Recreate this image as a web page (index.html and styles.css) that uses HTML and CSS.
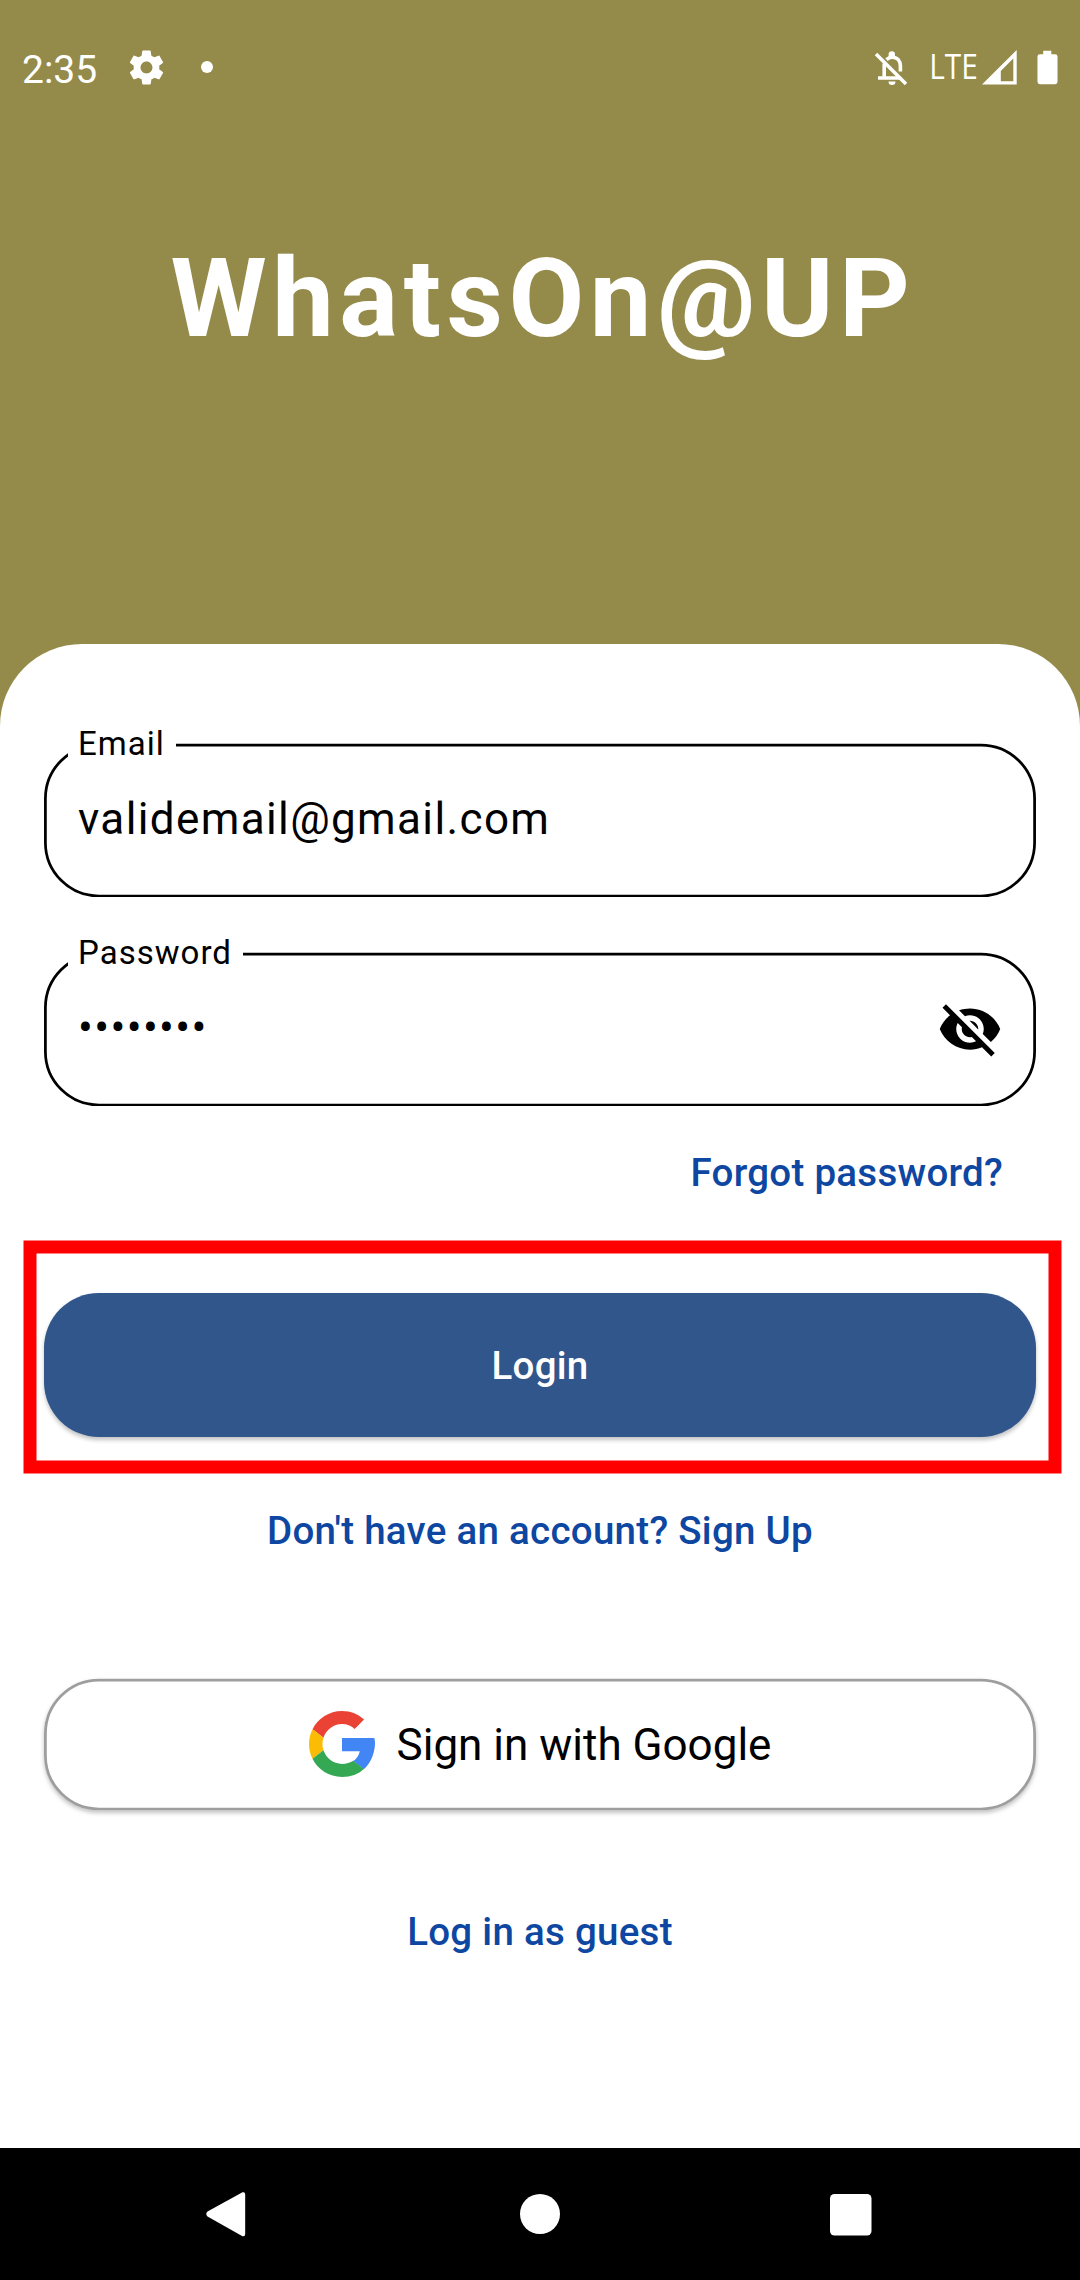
FILE: index.html
```html
<!DOCTYPE html>
<html lang="en">
<head>
<meta charset="utf-8">
<title>WhatsOn@UP</title>
<link rel="stylesheet" href="styles.css">
</head>
<body>
<div class="screen">
  <div class="status-bar">
    <span class="clock">2:35</span>
    <svg class="gear" viewBox="0 0 24 24"><path d="M19.43 12.98c.04-.32.07-.64.07-.98s-.03-.66-.07-.98l2.11-1.65c.19-.15.24-.42.12-.64l-2-3.46c-.12-.22-.39-.3-.61-.22l-2.49 1c-.52-.4-1.08-.73-1.69-.98l-.38-2.65C14.46 2.18 14.25 2 14 2h-4c-.25 0-.46.18-.49.42l-.38 2.65c-.61.25-1.17.59-1.69.98l-2.49-1c-.23-.09-.49 0-.61.22l-2 3.46c-.13.22-.07.49.12.64l2.11 1.65c-.04.32-.07.65-.07.98s.03.66.07.98l-2.11 1.65c-.19.15-.24.42-.12.64l2 3.46c.12.22.39.3.61.22l2.49-1c.52.4 1.08.73 1.69.98l.38 2.65c.03.24.24.42.49.42h4c.25 0 .46-.18.49-.42l.38-2.65c.61-.25 1.17-.59 1.69-.98l2.49 1c.23.09.49 0 .61-.22l2-3.46c.12-.22.07-.49-.12-.64l-2.11-1.65zM12 15.5c-1.93 0-3.5-1.57-3.5-3.5s1.57-3.5 3.5-3.5 3.5 1.57 3.5 3.5-1.57 3.5-3.5 3.5z"/></svg>
    <span class="dot"></span>
    <span class="spacer"></span>
    <svg class="bell" viewBox="0 0 34 36">
      <path class="line" d="M2 4L32 34"/>
      <path class="line" d="M10.200 13.500V27.500M4 28H25.500M12.500 9.600Q15 7.200 18 7.200C23.500 7.200 26.400 11 26.400 16V21.500"/>
      <path d="M14.600 7.500V4.500A3.200 3.200 0 0 1 21 4.500V7.500ZM14.500 31.500H21.500A3.500 3.500 0 0 1 14.500 31.500Z"/>
    </svg>
    <svg class="network" viewBox="0 0 50 46"><text x="0.300" y="35" textLength="48.500" lengthAdjust="spacingAndGlyphs">LTE</text></svg>
    <svg class="signal" viewBox="0 0 36 36"><path fill-rule="evenodd" d="M0 34.500L34.700 0V34.500ZM18.800 31.300H31.300V8.500L18.800 21Z"/></svg>
    <svg class="battery" viewBox="0 0 22 36"><path d="M6.500 0H15V3.500H19Q21.500 3.500 21.500 6V32.500Q21.500 35 19 35H3Q.5 35 .5 32.500V6Q.5 3.500 3 3.500H6.500Z"/></svg>
  </div>

  <h1 class="title">WhatsOn@UP</h1>

  <main class="sheet">
    <div class="field">
      <svg class="outline" viewBox="0 0 992 154"><rect x="1.400" y="2" width="989.200" height="151" rx="53.600"/></svg>
      <label class="label">Email</label>
      <span class="value">validemail@gmail.com</span>
    </div>
    <div class="field password">
      <svg class="outline" viewBox="0 0 992 154"><rect x="1.400" y="2" width="989.200" height="151" rx="53.600"/></svg>
      <label class="label">Password</label>
      <span class="value">••••••••</span>
      <svg class="eye" viewBox="0 0 24 24"><path d="M12 7c2.760 0 5 2.240 5 5 0 .65-.13 1.260-.36 1.830l2.920 2.920c1.510-1.260 2.700-2.890 3.430-4.750-1.730-4.390-6-7.500-11-7.500-1.400 0-2.740.25-3.980.7l2.160 2.160C10.740 7.130 11.350 7 12 7zM2 4.270l2.280 2.280.46.46C3.080 8.300 1.780 10.020 1 12c1.730 4.390 6 7.500 11 7.500 1.550 0 3.030-.3 4.380-.84l.42.42L19.730 22 21 20.730 3.270 3 2 4.270zM7.530 9.800l1.550 1.550c-.05.21-.08.43-.08.65 0 1.660 1.340 3 3 3 .22 0 .44-.03.65-.08l1.550 1.550c-.67.33-1.410.53-2.200.53-2.760 0-5-2.240-5-5 0-.79.2-1.530.53-2.200zm4.310-.78l3.150 3.150.02-.16c0-1.660-1.340-3-3-3l-.17.01z"/></svg>
    </div>
    <a class="link forgot">Forgot password?</a>
    <div class="login-area">
      <button class="login">Login</button>
      <svg class="marker" viewBox="0 0 1040 236"><rect x="8" y="8" width="1025" height="220"/></svg>
    </div>
    <a class="link signup">Don't have an account? Sign Up</a>
    <button class="google">
      <svg class="outline" viewBox="0 0 992 132"><rect x="1.400" y="2" width="989.200" height="129" rx="53.600"/></svg>
      <svg class="google-logo" viewBox="0 0 48 48">
        <path fill="#ea4335" d="M24 9.500c3.540 0 6.710 1.220 9.210 3.600l6.850-6.850C35.900 2.380 30.470 0 24 0 14.620 0 6.510 5.380 2.560 13.220l7.980 6.190C12.430 13.720 17.740 9.500 24 9.500z"/>
        <path fill="#4285f4" d="M47.500 19.700H24V29.200h12.940c-.58 2.960-2.260 5.480-4.780 7.180l7.730 6c4.510-4.180 7.590-10.360 8.090-17.830Q48.100 22 47.500 19.700z"/>
        <path fill="#fbbc05" d="M10.530 28.590c-.48-1.450-.76-2.990-.76-4.590s.27-3.140.76-4.590l-7.980-6.190C.92 16.460 0 20.120 0 24c0 3.880.92 7.540 2.560 10.780l7.970-6.190z"/>
        <path fill="#34a853" d="M24 48c6.480 0 11.930-2.130 15.890-5.810l-7.730-6c-2.150 1.450-4.920 2.300-8.160 2.300-6.260 0-11.570-4.220-13.470-9.910l-7.980 6.190C6.510 42.620 14.620 48 24 48z"/>
      </svg>
      <span class="google-text">Sign in with Google</span>
    </button>
    <a class="link guest">Log in as guest</a>
  </main>

  <nav class="nav-bar">
    <svg class="nav-icons" viewBox="0 0 1080 132">
      <path d="M207.500 63.500L242.500 44.300Q245.200 43.500 245.200 46.500V86Q245.200 89 242.500 88.200L207.500 68.500Q205 66 207.500 63.500Z"/>
      <circle cx="540" cy="66" r="20"/>
      <rect x="830" y="46" width="41.500" height="41.500" rx="4.500"/>
    </svg>
  </nav>
</div>
</body>
</html>
```
FILE: styles.css
```css
* { box-sizing: border-box; }

body {
  margin: 0;
  font-family: Roboto, "Liberation Sans", sans-serif;
  color: #000;
}

.screen {
  display: flex;
  flex-direction: column;
  width: 1080px;
  height: 2280px;
  background: #948a4a;
}

/* Status bar */
.status-bar {
  display: flex;
  align-items: center;
  height: 134px;
  padding: 0 22px;
  color: #fff;
  flex: none;
}
.status-bar svg { fill: #fff; flex: none; }
.clock { width: 104px; font-size: 39px; line-height: 46px; padding-top: 5px; }
.gear { width: 41px; height: 41px; }
.dot { width: 12px; height: 12px; margin-left: 34px; border-radius: 50%; background: #fff; }
.spacer { flex: 1; }
.bell { width: 34px; height: 36px; margin: 2px 21px 0 0; }
.bell .line { fill: none; stroke: #fff; stroke-width: 3.600px; }
.network { width: 50px; height: 46px; margin-right: 3px; overflow: visible; }
.network text { font: 34px "Open Sans", "Noto Sans", sans-serif; }
.signal { width: 36px; height: 36px; margin-right: 19px; margin-top: 2px; }
.battery { width: 21px; height: 36px; margin-top: 1px; }

.title {
  margin: 0;
  padding: 100px 0 0 6px;
  height: 510px;
  flex: none;
  font-size: 110px;
  line-height: 130px;
  font-weight: 700;
  letter-spacing: 5.500px;
  text-align: center;
  color: #fff;
}

/* Form sheet */
.sheet {
  display: flex;
  flex-direction: column;
  height: 1504px;
  flex: none;
  padding: 99px 44px 0;
  border-radius: 82px 82px 0 0;
  background: #fff;
}

.field {
  position: relative;
  display: flex;
  align-items: center;
  height: 154px;
  padding: 0 33px 0 34px;
}
.password { margin-top: 55px; }
.outline {
  position: absolute;
  inset: 0;
  width: 100%;
  height: 100%;
  fill: none;
  stroke: #000;
  stroke-width: 2.750px;
}
.label {
  position: absolute;
  left: 24px;
  top: -19px;
  padding: 0 11px 0 10px;
  font-size: 33px;
  line-height: 40px;
  letter-spacing: 1.030px;
  background: #fff;
}
.value {
  flex: 1;
  padding-bottom: 2px;
  font-size: 44px;
  line-height: 150px;
  letter-spacing: 1.375px;
}
.eye { width: 66px; height: 66px; }

.link {
  font-size: 38.500px;
  line-height: 50px;
  font-weight: 500;
  letter-spacing: .275px;
  text-align: center;
  color: #0d47a1;
}
.forgot { margin-top: 42px; padding-right: 33px; text-align: right; }

.login-area { position: relative; margin-top: 95px; }
.login {
  display: block;
  width: 100%;
  height: 143.500px;
  padding: 2px 0 0;
  border: 0;
  border-radius: 55px;
  background: #31568b;
  box-shadow: 0 3px 4px rgba(0, 0, 0, .24);
  font: 500 38.500px/50px Roboto, sans-serif;
  letter-spacing: .275px;
  color: #fff;
}
.marker {
  position: absolute;
  left: -22px;
  top: -54px;
  width: 1040px;
  height: 236px;
  fill: none;
  stroke: #f00;
  stroke-width: 13px;
}

.signup { margin-top: 69.500px; }

.google {
  position: relative;
  display: flex;
  align-items: center;
  justify-content: center;
  gap: 22px;
  height: 132px;
  margin-top: 122px;
  padding: 0;
  border: 0;
  border-radius: 55px;
  background: #fff;
  box-shadow: 0 3px 4px rgba(0, 0, 0, .24);
  font: 44px/52px Roboto, sans-serif;
  color: #000;
}
.google .outline { stroke: #9e9e9e; }
.google-logo { width: 66px; height: 66px; }
.google-text { padding-top: 2px; }

.guest { margin-top: 97px; }

/* Navigation bar */
.nav-bar { height: 132px; flex: none; background: #000; }
.nav-icons { display: block; width: 1080px; height: 132px; fill: #fff; }
```
